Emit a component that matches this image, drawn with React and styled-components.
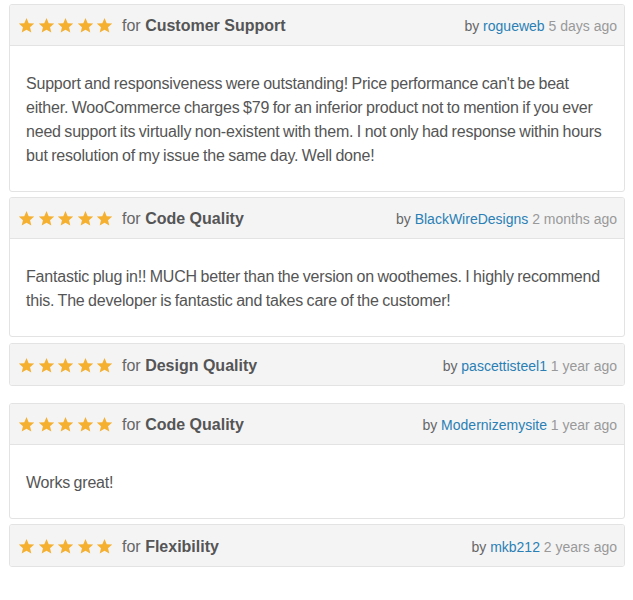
import React from "react";
import styled, { createGlobalStyle } from "styled-components";

const Global = createGlobalStyle`
  html, body { margin: 0; padding: 0; background: #fff; }
  body { font-family: "Liberation Sans", Arial, sans-serif; }
`;

const List = styled.div`
  padding: 4px 8px 0 9px;
  display: flex;
  flex-direction: column;
`;

const Card = styled.div`
  border: 1px solid #e3e3e3;
  border-radius: 3px;
  background: #fff;
  margin-bottom: ${(p) => p.$gap}px;
  overflow: hidden;
`;

const Header = styled.div`
  height: 41px;
  box-sizing: border-box;
  display: flex;
  align-items: center;
  justify-content: space-between;
  padding: 2px 7px 0 8px;
  background: #f4f4f5;
  border-bottom: ${(p) => (p.$hasBody ? "1px solid #e3e3e3" : "none")};
`;

const Left = styled.div`
  display: flex;
  align-items: center;
`;

const Stars = styled.div`
  display: flex;
  gap: 2.5px;
  margin-right: 9px;
  margin-top: -1px;
`;

const Title = styled.span`
  font-size: 16px;
  color: #666;
  strong { color: #555; font-weight: bold; }
`;

const Meta = styled.div`
  font-size: 14px;
  color: #666;
`;

const Author = styled.a`
  color: #2a80b4;
  text-decoration: none;
`;

const Time = styled.span`
  color: #999;
`;

const Body = styled.div`
  padding: 26px 16px 23px;
  font-size: 16px;
  line-height: 24px;
  letter-spacing: -0.2px;
  word-spacing: -0.7px;
  color: #555;
`;

const Star = () => (
  <svg width="17" height="17" viewBox="0 0 24 24">
    <path
      fill="#f5b030"
      d="M12 1.5l3.1 7.2 7.8.6-5.9 5.1 1.8 7.6L12 17.9 5.2 22l1.8-7.6L1.1 9.3l7.8-.6z"
    />
  </svg>
);

const reviews = [
  {
    cat: "Customer Support",
    author: "rogueweb",
    time: "5 days ago",
    text: "Support and responsiveness were outstanding! Price performance can't be beat either. WooCommerce charges $79 for an inferior product not to mention if you ever need support its virtually non-existent with them. I not only had response within hours but resolution of my issue the same day. Well done!",
    gap: 5,
  },
  {
    cat: "Code Quality",
    author: "BlackWireDesigns",
    time: "2 months ago",
    text: "Fantastic plug in!! MUCH better than the version on woothemes. I highly recommend this. The developer is fantastic and takes care of the customer!",
    gap: 6,
  },
  { cat: "Design Quality", author: "pascettisteel1", time: "1 year ago", gap: 17 },
  {
    cat: "Code Quality",
    author: "Modernizemysite",
    time: "1 year ago",
    text: "Works great!",
    gap: 5,
  },
  { cat: "Flexibility", author: "mkb212", time: "2 years ago", gap: 0 },
];

export default function App() {
  return (
    <>
      <Global />
      <List>
        {reviews.map((r, i) => (
          <Card key={i} $gap={r.gap}>
            <Header $hasBody={!!r.text}>
              <Left>
                <Stars>
                  {[0, 1, 2, 3, 4].map((s) => (
                    <Star key={s} />
                  ))}
                </Stars>
                <Title>
                  for <strong>{r.cat}</strong>
                </Title>
              </Left>
              <Meta>
                by <Author href="#">{r.author}</Author> <Time>{r.time}</Time>
              </Meta>
            </Header>
            {r.text && <Body>{r.text}</Body>}
          </Card>
        ))}
      </List>
    </>
  );
}
